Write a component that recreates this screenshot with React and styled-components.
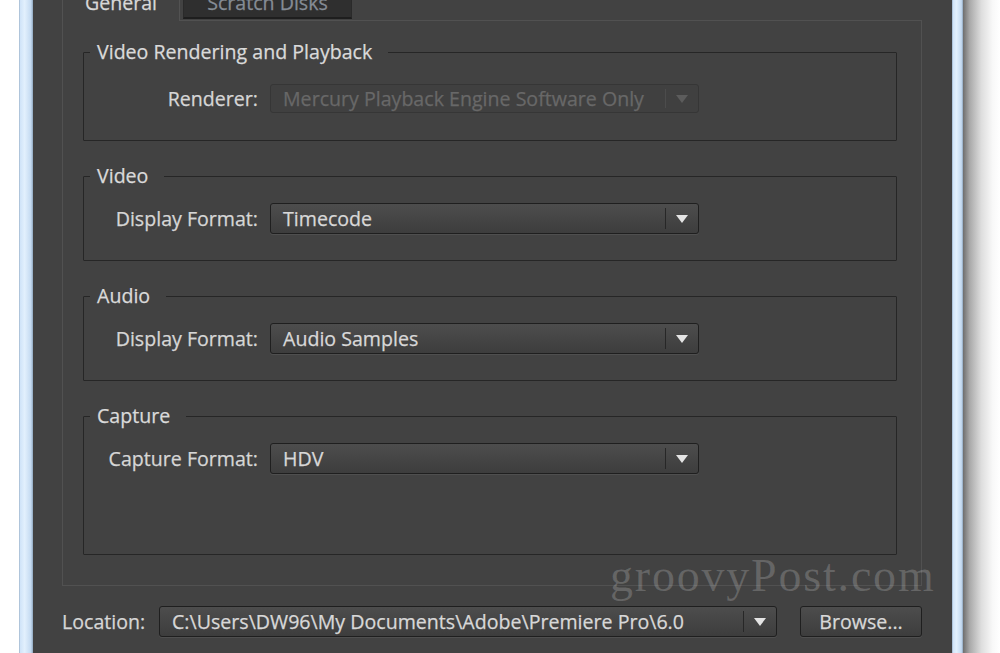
import React from "react";
import styled, { createGlobalStyle } from "styled-components";

const GlobalStyle = createGlobalStyle`
  *, *::before, *::after { box-sizing: border-box; }
  html, body { margin: 0; padding: 0; background: #ffffff; }
  body { font-family: "Open Sans", "Noto Sans", sans-serif; }
`;

const Screen = styled.div`
  display: flex;
  width: 1000px;
  height: 653px;
  overflow: hidden;
  background: #ffffff;
`;

const Gutter = styled.div`
  flex: none;
  width: 19px;
`;

const FrameEdge = styled.div`
  flex: none;
  width: ${(p) => p.$w}px;
  background: linear-gradient(
    to right,
    #8fa6bd 0,
    #cfe3f8 1px,
    #e2f0fd 40%,
    #c4daf1 85%,
    #8fa6bd 100%
  );
`;

const Shadow = styled.div`
  flex: 1;
  background: linear-gradient(to right, #6e6e6e 0, #a9a9a9 18%, #dedede 50%, #f8f8f8 80%, #ffffff 100%);
`;

const Dialog = styled.div`
  position: relative;
  flex: none;
  width: 919px;
  background: #424242;
  padding: 0 30px 0 29px;
  display: flex;
  flex-direction: column;
  color: #d8d8d8;
  font-size: 19.6px;
  -webkit-text-stroke: 0.25px currentColor;
`;

const Stack = styled.div`
  display: flex;
  flex-direction: column;
  margin-top: -14px;
`;

const TabBar = styled.div`
  display: flex;
  align-items: flex-start;
  height: 34px;
  gap: 3px;
`;

const Tab = styled.div`
  position: relative;
  z-index: 1;
  flex: none;
  width: ${(p) => p.$w}px;
  height: ${(p) => (p.$active ? 35 : 33)}px;
  line-height: 34px;
  text-align: center;
  overflow: hidden;
  white-space: nowrap;
  background: ${(p) => (p.$active ? "#424242" : "#2f2f2f")};
  color: ${(p) => (p.$active ? "#d8d8d8" : "#858c95")};
  border-left: 1px solid ${(p) => (p.$active ? "#525252" : "#2a2a2a")};
  border-right: 1px solid ${(p) => (p.$active ? "#525252" : "#2a2a2a")};
  border-bottom: ${(p) => (p.$active ? "none" : "2px solid #1e1e1e")};
`;

const Panel = styled.div`
  display: flex;
  flex-direction: column;
  gap: 23px;
  border: 1px solid #515151;
  padding: 19px 24px 30px 20px;
`;

const Group = styled.fieldset`
  margin: 0;
  min-width: 0;
  border: 1px solid #262626;
  border-radius: 1px;
  padding: 0 0 ${(p) => p.$pb}px;
`;

const Legend = styled.legend`
  margin-left: 6px;
  padding: 0 16px 0 7px;
  line-height: 24px;
  color: #dadada;
`;

const Row = styled.div`
  display: grid;
  grid-template-columns: 174px 429px;
  column-gap: 12px;
  align-items: center;
  margin-top: ${(p) => p.$mt}px;
`;

const Label = styled.div`
  text-align: right;
  white-space: nowrap;
  color: #d6d6d6;
`;

const Combo = styled.div`
  display: flex;
  align-items: stretch;
  height: ${(p) => (p.$disabled ? 29 : 31)}px;
  width: ${(p) => (p.$w ? `${p.$w}px` : "auto")};
  border: 1px solid ${(p) => (p.$disabled ? "#363636" : "#1f1f1f")};
  border-radius: 3px;
  background: ${(p) =>
    p.$disabled ? "#404040" : "linear-gradient(to bottom, #4d4d4d 0%, #454545 50%, #3d3d3d 100%)"};
  box-shadow: ${(p) => (p.$disabled ? "none" : "0 1px 0 rgba(255,255,255,0.07)")};
  color: ${(p) => (p.$disabled ? "#686868" : "#d8d8d8")};
`;

const ComboText = styled.div`
  flex: 1;
  display: flex;
  align-items: center;
  padding-left: 12px;
  white-space: nowrap;
  overflow: hidden;
`;

const ComboArrow = styled.div`
  flex: none;
  width: 33px;
  display: flex;
  align-items: center;
  justify-content: center;
  margin: 4px 0;
  border-left: 1px solid ${(p) => (p.$disabled ? "#4c4c4c" : "#272727")};
`;

const BottomRow = styled.div`
  display: flex;
  align-items: center;
  margin-top: 20px;
`;

const LocLabel = styled.div`
  flex: none;
  width: 97px;
  color: #d6d6d6;
`;

const Button = styled.div`
  flex: none;
  width: 122px;
  height: 31px;
  margin-left: 23px;
  display: flex;
  align-items: center;
  justify-content: center;
  border: 1px solid #1f1f1f;
  border-radius: 3px;
  background: linear-gradient(to bottom, #4d4d4d 0%, #454545 50%, #3d3d3d 100%);
  box-shadow: 0 1px 0 rgba(255,255,255,0.07);
  color: #d8d8d8;
`;

const Watermark = styled.div`
  position: absolute;
  left: 577px;
  top: 553px;
  font-family: "Liberation Serif", "DejaVu Serif", serif;
  font-size: 46px;
  line-height: 46px;
  letter-spacing: 1.8px;
  color: rgba(255, 255, 255, 0.19);
  -webkit-text-stroke: 0;
  white-space: nowrap;
  pointer-events: none;
`;

const Arrow = ({ disabled }) => (
  <svg width="12" height="8" viewBox="0 0 12 8">
    <polygon points="0,0 12,0 6,8" fill={disabled ? "#5c5c5c" : "#e4e4e4"} />
  </svg>
);

const Select = ({ value, disabled, w }) => (
  <Combo $disabled={disabled} $w={w}>
    <ComboText>{value}</ComboText>
    <ComboArrow $disabled={disabled}>
      <Arrow disabled={disabled} />
    </ComboArrow>
  </Combo>
);

const groups = [
  { title: "Video Rendering and Playback", label: "Renderer:", value: "Mercury Playback Engine Software Only", disabled: true, mt: 20, pb: 27 },
  { title: "Video", label: "Display Format:", value: "Timecode", mt: 15, pb: 26 },
  { title: "Audio", label: "Display Format:", value: "Audio Samples", mt: 15, pb: 26 },
  { title: "Capture", label: "Capture Format:", value: "HDV", mt: 15, pb: 80 },
];

export default function App() {
  return (
    <>
      <GlobalStyle />
      <Screen>
        <Gutter />
        <FrameEdge $w={14} />
        <Dialog>
          <Stack>
            <TabBar>
              <Tab $active $w={118}>General</Tab>
              <Tab $w={169}>Scratch Disks</Tab>
            </TabBar>
            <Panel>
              {groups.map((g) => (
                <Group key={g.title} $pb={g.pb}>
                  <Legend>{g.title}</Legend>
                  <Row $mt={g.mt}>
                    <Label>{g.label}</Label>
                    <Select value={g.value} disabled={g.disabled} />
                  </Row>
                </Group>
              ))}
            </Panel>
            <BottomRow>
              <LocLabel>Location:</LocLabel>
              <Select value="C:\Users\DW96\My Documents\Adobe\Premiere Pro\6.0" w={618} />
              <Button>Browse...</Button>
            </BottomRow>
          </Stack>
          <Watermark>groovyPost.com</Watermark>
        </Dialog>
        <FrameEdge $w={11} />
        <Shadow />
      </Screen>
    </>
  );
}
